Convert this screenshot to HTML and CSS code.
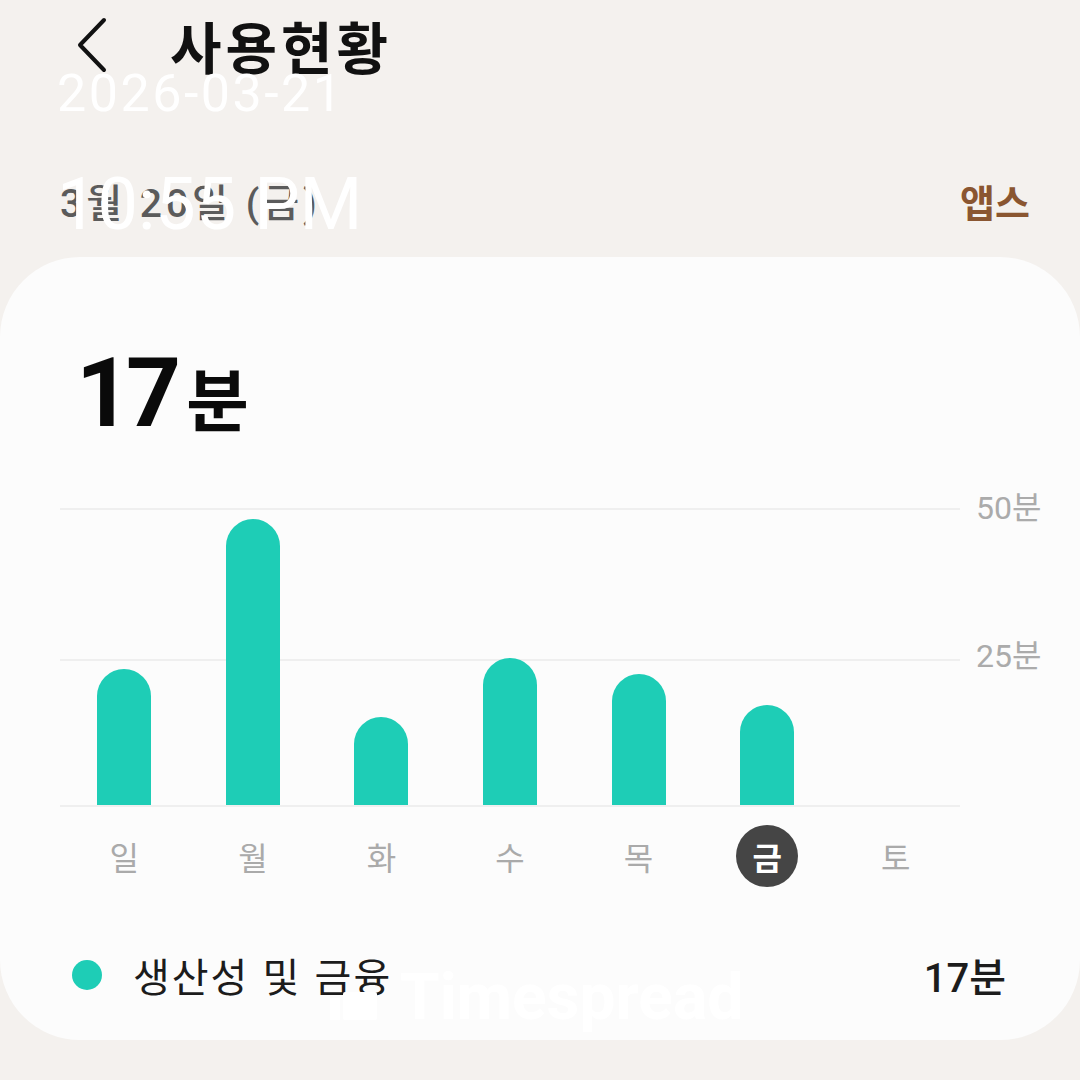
FILE: index.html
```
<!DOCTYPE html>
<html lang="ko">

<head>
    <meta charset="UTF-8">
    <meta name="viewport" content="width=device-width, initial-scale=1.0">
    <title>사용현황</title>
    <link rel="stylesheet" href="styles.css">
</head>

<body>
    <!-- 상단 바 -->
    <header class="topbar">
        <svg class="back" width="34" height="58" viewBox="0 0 34 58">
            <polyline points="28,4 4,29 28,54" />
        </svg>
        <h1>사용현황</h1>
    </header>

    <div class="subbar">
        <span class="date">3월 20일 (금)</span>
        <span class="apps">앱스</span>
    </div>

    <!-- 사용 시간 카드 -->
    <section class="card">
        <div class="total"><span class="num">17</span><span class="unit">분</span></div>

        <div class="chart">
            <div class="plot">
                <div class="col"><div class="bar" style="height: 136px"></div></div>
                <div class="col"><div class="bar" style="height: 286px"></div></div>
                <div class="col"><div class="bar" style="height: 88px"></div></div>
                <div class="col"><div class="bar" style="height: 147px"></div></div>
                <div class="col"><div class="bar" style="height: 131px"></div></div>
                <div class="col"><div class="bar" style="height: 100px"></div></div>
                <div class="col"></div>
            </div>
            <div class="axis">
                <span class="tick">50분</span>
                <span class="tick tick-mid">25분</span>
            </div>
        </div>

        <div class="days">
            <div class="day"><span>일</span></div>
            <div class="day"><span>월</span></div>
            <div class="day"><span>화</span></div>
            <div class="day"><span>수</span></div>
            <div class="day"><span>목</span></div>
            <div class="day"><span class="active">금</span></div>
            <div class="day"><span>토</span></div>
        </div>

        <div class="legend">
            <span class="dot"></span>
            <span class="category">생산성 및 금융</span>
            <span class="time">17분</span>
        </div>
    </section>

    <!-- 촬영 시각 -->
    <div class="stamp">
        <span class="stamp-date">2026-03-21</span>
        <span class="stamp-time">10:55 PM</span>
    </div>

    <div class="watermark">
        <svg class="wm-icon" width="47" height="28" viewBox="0 0 47 28">
            <rect x="0" y="6" width="10" height="22" />
            <rect x="13" y="0" width="34" height="28" rx="2" />
        </svg>
        <span>Timespread</span>
    </div>
</body>

</html>
```

FILE: styles.css
```
/* 기본 */

body {
    margin: 0;
    padding: 0;
    width: 1080px;
    height: 1080px;
    overflow: hidden;
    position: relative;
    background-color: #f4f1ee;
    font-family: Roboto, "Noto Sans CJK KR", sans-serif;
    color: #111;
}

/* 상단 바 */

.topbar {
    display: flex;
    align-items: center;
    height: 90px;
    padding-left: 76px;
}

.back polyline {
    fill: none;
    stroke: #111;
    stroke-width: 4;
    stroke-linecap: round;
    stroke-linejoin: round;
}

.topbar h1 {
    margin: 0 0 0 60px;
    font-family: "Noto Sans CJK KR", sans-serif;
    font-size: 56px;
    font-weight: 700;
    line-height: 90px;
    letter-spacing: 4px;
    color: #111;
}

.subbar {
    display: flex;
    justify-content: space-between;
    align-items: center;
    height: 80px;
    margin-top: 70px;
    padding: 0 50px 0 60px;
}

.date {
    font-size: 39px;
    font-weight: 500;
    letter-spacing: 4px;
    color: #5b5b5b;
}

.apps {
    font-family: "Noto Sans CJK KR", sans-serif;
    font-size: 38px;
    font-weight: 700;
    color: #8a5631;
}

/* 카드 */

.card {
    margin-top: 17px;
    background-color: #fcfcfc;
    border-radius: 80px;
    padding: 86px 0 35px 0;
}

.total {
    padding-left: 76px;
    line-height: 100px;
    font-weight: 700;
    color: #0a0a0a;
}

.total .num {
    font-size: 96px;
    letter-spacing: -5px;
}

.total .unit {
    font-family: "Noto Sans CJK KR", sans-serif;
    font-size: 68px;
    margin-left: 10px;
}

/* 차트 */

.chart {
    display: flex;
    margin-top: 37px;
    padding-left: 60px;
}

.plot {
    display: flex;
    width: 900px;
    height: 299px;
    box-sizing: border-box;
    border-top: 2px solid #efefef;
    border-bottom: 2px solid #efefef;
    background: linear-gradient(to bottom, transparent 149px, #efefef 149px, #efefef 151px, transparent 151px);
}

.col {
    flex: 1;
    display: flex;
    justify-content: center;
    align-items: flex-end;
}

.bar {
    width: 54px;
    background-color: #1ecdb6;
    border-radius: 27px 27px 0 0;
}

.axis {
    display: flex;
    flex-direction: column;
    margin-left: 16px;
}

.tick {
    height: 0;
    line-height: 0;
    font-size: 32px;
    color: #ababab;
}

.tick-mid {
    margin-top: 148px;
}

/* 요일 */

.days {
    display: flex;
    width: 900px;
    margin: 18px 0 0 60px;
}

.day {
    flex: 1;
    display: flex;
    justify-content: center;
}

.day span {
    width: 62px;
    height: 62px;
    line-height: 62px;
    text-align: center;
    font-family: "Noto Sans CJK KR", sans-serif;
    font-size: 32px;
    color: #aaaaaa;
}

.day .active {
    border-radius: 50%;
    background-color: #454545;
    color: #ffffff;
    font-weight: 700;
}

/* 범례 */

.legend {
    display: flex;
    align-items: center;
    height: 60px;
    margin-top: 58px;
    padding: 0 74px 0 72px;
}

.dot {
    width: 30px;
    height: 30px;
    border-radius: 50%;
    background-color: #1ecdb6;
}

.category {
    flex: 1;
    margin-left: 31px;
    font-family: "Noto Sans CJK KR", sans-serif;
    font-size: 40px;
    letter-spacing: 2px;
    color: #1c1c1c;
}

.time {
    font-size: 40px;
    font-weight: 500;
    color: #1c1c1c;
}

/* 촬영 시각 / 워터마크 */

.stamp {
    position: absolute;
    left: 57px;
    top: 68px;
    display: flex;
    flex-direction: column;
    color: #ffffff;
}

.stamp-date {
    font-size: 52px;
    line-height: 52px;
    letter-spacing: 2.5px;
}

.stamp-time {
    margin-top: 49px;
    font-size: 72px;
    line-height: 72px;
}

.watermark {
    position: absolute;
    left: 330px;
    top: 966px;
    display: flex;
    align-items: flex-end;
    gap: 23px;
    color: #ffffff;
}

.wm-icon {
    margin-bottom: 10px;
    fill: #ffffff;
}

.watermark span {
    font-size: 64px;
    line-height: 64px;
    font-weight: 700;
}
```
